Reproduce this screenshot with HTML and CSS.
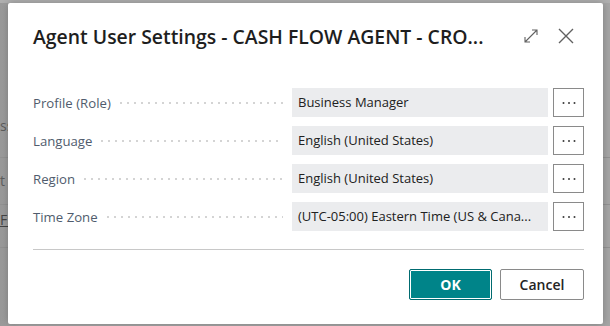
FILE: index.html
```html
<!DOCTYPE html>
<html lang="en">
<head>
    <meta charset="UTF-8">
    <title>Agent User Settings</title>
    <link rel="stylesheet" href="styles.css">
</head>
<body>
    <!-- Page behind the dialog -->
    <div class="page">
        <div class="page-row page-row-first">ss</div>
        <div class="page-row page-row-second">t</div>
        <div class="page-row page-row-third"><span class="page-link">FL</span></div>
    </div>

    <!-- Settings Dialog -->
    <div class="dialog">
        <div class="dialog-header">
            <h1 class="dialog-title">Agent User Settings - CASH FLOW AGENT - CRO...</h1>
            <div class="dialog-actions">
                <svg class="icon" width="18" height="18" viewBox="0 0 18 18">
                    <path d="M3 15 L15 3 M10 3 H15 V8 M3 10 V15 H8" fill="none" stroke="#616161" stroke-width="1.1"/>
                </svg>
                <svg class="icon" width="18" height="18" viewBox="0 0 18 18">
                    <path d="M2 2 L16 16 M16 2 L2 16" fill="none" stroke="#616161" stroke-width="1.4"/>
                </svg>
            </div>
        </div>

        <div class="fields">
            <div class="field-row">
                <div class="field-label"><span>Profile (Role)</span><span class="leader"></span></div>
                <div class="field-value">Business Manager</div>
                <button class="field-lookup"><svg width="14" height="4" viewBox="0 0 14 4"><circle cx="1.5" cy="2" r="1"/><circle cx="7" cy="2" r="1"/><circle cx="12.5" cy="2" r="1"/></svg></button>
            </div>
            <div class="field-row">
                <div class="field-label"><span>Language</span><span class="leader"></span></div>
                <div class="field-value">English (United States)</div>
                <button class="field-lookup"><svg width="14" height="4" viewBox="0 0 14 4"><circle cx="1.5" cy="2" r="1"/><circle cx="7" cy="2" r="1"/><circle cx="12.5" cy="2" r="1"/></svg></button>
            </div>
            <div class="field-row">
                <div class="field-label"><span>Region</span><span class="leader"></span></div>
                <div class="field-value">English (United States)</div>
                <button class="field-lookup"><svg width="14" height="4" viewBox="0 0 14 4"><circle cx="1.5" cy="2" r="1"/><circle cx="7" cy="2" r="1"/><circle cx="12.5" cy="2" r="1"/></svg></button>
            </div>
            <div class="field-row">
                <div class="field-label"><span>Time Zone</span><span class="leader"></span></div>
                <div class="field-value">(UTC-05:00) Eastern Time (US &amp; Cana...</div>
                <button class="field-lookup"><svg width="14" height="4" viewBox="0 0 14 4"><circle cx="1.5" cy="2" r="1"/><circle cx="7" cy="2" r="1"/><circle cx="12.5" cy="2" r="1"/></svg></button>
            </div>
        </div>

        <div class="dialog-footer">
            <button class="btn btn-primary">OK</button>
            <button class="btn">Cancel</button>
        </div>
    </div>
</body>
</html>
```

FILE: styles.css
```css
/* General */
* {
    margin: 0;
    padding: 0;
    box-sizing: border-box;
}

body {
    width: 610px;
    height: 326px;
    overflow: hidden;
    position: relative;
    background: #a5a5a5;
    font-family: 'Open Sans', 'Noto Sans', sans-serif;
}

/* Dimmed page behind */
.page {
    width: 100%;
    height: 100%;
    border-top: 3px solid #b0b0b0;
    background: linear-gradient(to right, #9a9a9a 0, #a6a6a6 20px, #a6a6a6 100%);
    color: #5e5e5e;
    font-size: 14px;
}

.page-row {
    border-bottom: 1px solid #939393;
    line-height: 20px;
}

.page-row-first {
    height: 155px;
    padding-top: 113px;
}

.page-row-second {
    height: 47px;
    padding-top: 13px;
}

.page-row-third {
    height: 43px;
    padding-top: 5px;
}

.page-link {
    text-decoration: underline;
    color: #454545;
}

/* Dialog */
.dialog {
    position: absolute;
    left: 8px;
    top: 3px;
    width: 595px;
    height: 321px;
    background: #fff;
    border-radius: 2px;
    box-shadow: 0 0 8px rgba(0, 0, 0, 0.25);
    padding: 18px 19px 0 25px;
}

.dialog-header {
    display: flex;
    align-items: center;
    justify-content: space-between;
    height: 30px;
}

.dialog-title {
    font-size: 19.4px;
    font-weight: 600;
    color: #1e1e1e;
    white-space: nowrap;
}

.dialog-actions {
    display: flex;
    gap: 17px;
    margin-right: 9px;
}

/* Fields */
.fields {
    margin-top: 37px;
    display: flex;
    flex-direction: column;
    gap: 9px;
}

.field-row {
    display: flex;
    height: 29px;
    align-items: center;
}

.field-label {
    flex: 1;
    display: flex;
    align-items: center;
    font-size: 13.2px;
    color: #505c6d;
    margin-right: 9px;
}

.leader {
    flex: 1;
    height: 2px;
    margin: 1px 0 0 9px;
    background-image: linear-gradient(to right, #d4d4d4 0, #d4d4d4 2px, transparent 2px);
    background-size: 7px 2px;
    background-repeat: repeat-x;
}

.field-value {
    width: 256px;
    height: 29px;
    line-height: 29px;
    padding: 0 6px;
    background: #ebecee;
    font-size: 13px;
    color: #212121;
    white-space: nowrap;
    overflow: hidden;
}

.field-lookup {
    width: 31px;
    height: 29px;
    margin-left: 5px;
    border: 1px solid #8a8a8a;
    background: #fff;
    display: flex;
    align-items: center;
    justify-content: center;
}

.field-lookup svg {
    fill: #3b3b3b;
}

/* Footer */
.dialog-footer {
    margin-top: 18px;
    border-top: 1px solid #c8c8c8;
    padding-top: 19px;
    display: flex;
    justify-content: flex-end;
    gap: 8px;
}

.btn {
    width: 84px;
    height: 31px;
    border: 1px solid #8a8a8a;
    border-radius: 2px;
    background: #fff;
    font-family: inherit;
    font-size: 14px;
    font-weight: 600;
    color: #242424;
}

.btn-primary {
    width: 83px;
    background: #008489;
    border-color: #006b70;
    color: #fff;
    font-weight: 700;
    box-shadow: inset 0 0 0 1px #fff;
}
```
